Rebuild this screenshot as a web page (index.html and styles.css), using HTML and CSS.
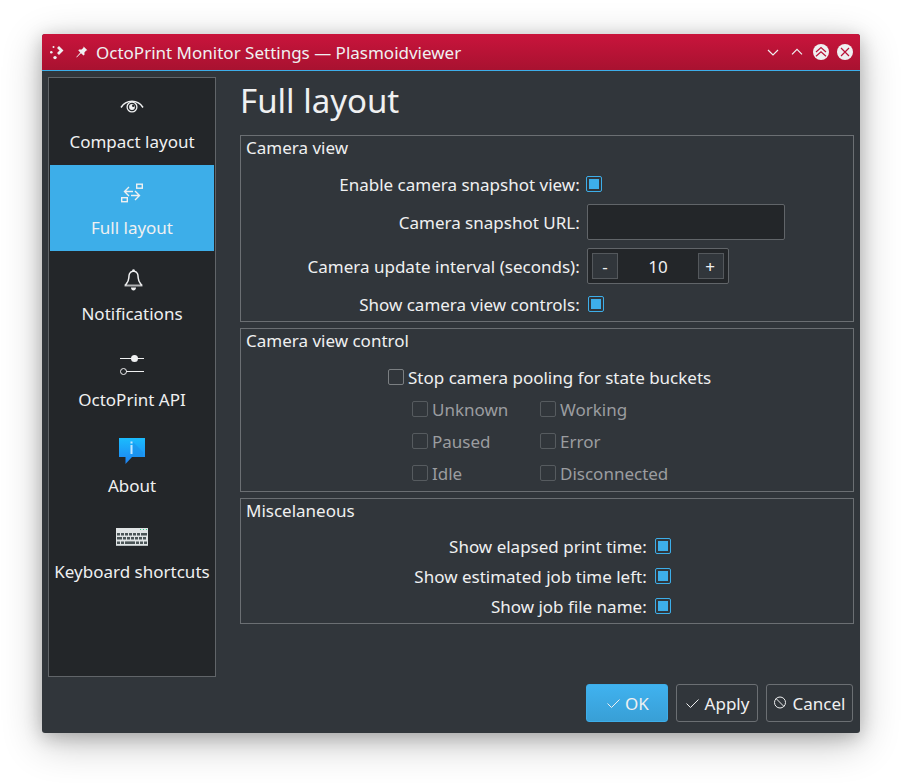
FILE: index.html
```html
<!DOCTYPE html>
<html lang="en">
<head>
<meta charset="utf-8">
<title>OctoPrint Monitor Settings</title>
<link rel="stylesheet" href="styles.css">
</head>
<body>
<main class="window">
  <header class="titlebar">
    <svg class="app-icon" width="16" height="16" viewBox="0 0 16 16"><path d="M8 3l3.500 3.500L8 10" fill="none" stroke="#eff0f1" stroke-width="2.800"/><circle cx="3.500" cy="3" r="1"/><circle cx="1.300" cy="8.300" r="1.300"/><circle cx="5" cy="13.600" r="1.700"/></svg>
    <svg class="pin-icon" width="12" height="12" viewBox="0 0 12 12"><path d="M7.600 .4l3.800 3.800-1.200.3-1.800 1.900.1 2.300-1 .9-2.500-2.400L.7 11.400.3 11l4-4.400L2.200 4.300l1-.8 2.400.1 1.800-1.900z"/></svg>
    <h1 class="caption">OctoPrint Monitor Settings — Plasmoidviewer</h1>
    <div class="controls">
      <svg width="16" height="16" viewBox="0 0 16 16"><path class="line" stroke-width="1.200" d="M3 6l5 5 5-5"/></svg>
      <svg width="16" height="16" viewBox="0 0 16 16"><path class="line" stroke-width="1.200" d="M3 10.300l5-5 5 5"/></svg>
      <svg width="16" height="16" viewBox="0 0 16 16"><circle cx="8" cy="8" r="8"/><path class="cut" d="M3 8l5-4.500L13 8M3 12.300l5-4.600 5 4.600"/></svg>
      <svg width="16" height="16" viewBox="0 0 16 16"><circle cx="8" cy="8" r="8"/><path class="cut" d="M4 4l8 8M12 4l-8 8"/></svg>
    </div>
  </header>
  <div class="body">
    <nav class="sidebar">
      <a class="item"><svg width="32" height="32" viewBox="0 0 32 32"><g class="line"><path stroke-width="1.500" d="M5 16.500C10 8.200 22 8.200 27 16.500"/><circle cx="16" cy="16" r="4.900" stroke-width="1.300"/></g><circle cx="16" cy="16" r="2.900"/><circle cx="17.300" cy="14.700" r="1.300" fill="#232629"/></svg><span>Compact layout</span></a>
      <a class="item selected"><svg width="32" height="32" viewBox="0 0 32 32"><g class="line" stroke-width="1.400"><rect x="20.700" y="7.200" width="5.600" height="4"/><rect x="5.700" y="20.700" width="5.600" height="4"/><path d="M17 14.500H8.500M13 10L8.500 14.500l4.500 4.500M15 18.500h8.500M19 14l4.500 4.500-4.500 4.500"/></g></svg><span>Full layout</span></a>
      <a class="item"><svg width="32" height="32" viewBox="0 0 32 32"><path class="line" stroke-width="1.500" d="M17.500 8c-4.400 1-4.500 3.500-4.700 7-.2 3.500-2 5-3.500 7.500M17.500 8c4.400 1 4.500 3.500 4.700 7 .2 3.500 2 5 3.500 7.500"/><path d="M8.500 21.500h18v2h-18z" opacity=".7"/><circle cx="17.500" cy="7.600" r="1.300"/><path d="M15 24.500h5c0 4-5 4-5 0z"/></svg><span>Notifications</span></a>
      <a class="item"><svg width="32" height="32" viewBox="0 0 32 32"><path class="line" d="M4 9.500h24M10 22.500h18"/><circle cx="18.500" cy="9.500" r="3.500"/><circle class="line" cx="7.500" cy="22.500" r="3"/></svg><span>OctoPrint API</span></a>
      <a class="item"><svg width="32" height="32" viewBox="0 0 32 32"><defs><linearGradient id="info" x2="0" y2="1"><stop stop-color="#1bbcfd"/><stop offset="1" stop-color="#1d82f3"/></linearGradient></defs><path fill="url(#info)" d="M3 3h26v19H16l-6.500 7V22H3z"/><path fill="#1a8fe9" opacity=".55" d="M17 7l10 10v5H17z"/><path fill="#c3e6ff" d="M14.500 6.500h2v2h-2zM14.500 10h2v9h-2z"/></svg><span>About</span></a>
      <a class="item"><svg width="32" height="32" viewBox="0 0 32 32"><path fill="#dfe3e4" d="M0 7h32v18H0z"/><path stroke="#b9bfc1" d="M0 24.500h32"/><path stroke="#35c78a" stroke-dasharray="1 2" d="M24 8.500h7"/><g stroke="#4a5456" stroke-width="2.600"><path stroke-dasharray="3 1" d="M1 13.300h23"/><path d="M25 13.300h6M1 17.300h5"/><path stroke-dasharray="3 1" d="M7 17.300h24M1 21.700h7M20 21.700h11"/><path d="M9 21.700h10"/></g></svg><span>Keyboard shortcuts</span></a>
    </nav>
    <section class="page">
      <h2>Full layout</h2>
      <fieldset class="group camera">
        <div class="group-title">Camera view</div>
        <div class="camera-form">
          <label>Enable camera snapshot view:</label><i class="check on shifted"></i>
          <label>Camera snapshot URL:</label><div class="field"></div>
          <label>Camera update interval (seconds):</label><div class="spin"><b>-</b><span>10</span><b class="plus">+</b></div>
          <label>Show camera view controls:</label><i class="check on"></i>
        </div>
      </fieldset>
      <fieldset class="group control">
        <div class="group-title">Camera view control</div>
        <div class="option main-option"><i class="check"></i><span>Stop camera pooling for state buckets</span></div>
        <div class="buckets">
          <div class="option"><i class="check"></i><span>Unknown</span></div><div class="option"><i class="check"></i><span>Working</span></div>
          <div class="option"><i class="check"></i><span>Paused</span></div><div class="option"><i class="check"></i><span>Error</span></div>
          <div class="option"><i class="check"></i><span>Idle</span></div><div class="option"><i class="check"></i><span>Disconnected</span></div>
        </div>
      </fieldset>
      <fieldset class="group misc">
        <div class="group-title">Miscelaneous</div>
        <div class="misc-form">
          <label>Show elapsed print time:</label><i class="check on"></i>
          <label>Show estimated job time left:</label><i class="check on"></i>
          <label>Show job file name:</label><i class="check on"></i>
        </div>
      </fieldset>
    </section>
  </div>
  <footer class="actions">
    <div class="button primary"><svg width="16" height="16" viewBox="0 0 16 16"><path class="line" d="M2.500 8.500l4 4 8-8"/></svg><span>OK</span></div>
    <div class="button apply"><svg width="16" height="16" viewBox="0 0 16 16"><path class="line" d="M1.500 8.500l4 4 8-8"/></svg><span>Apply</span></div>
    <div class="button cancel"><svg width="16" height="16" viewBox="0 0 16 16"><g class="line"><circle cx="7" cy="7.500" r="5.500"/><path d="M3 3.500l8 8"/></g></svg><span>Cancel</span></div>
  </footer>
</main>
</body>
</html>
```
FILE: styles.css
```css
* { box-sizing: border-box; }
body { margin: 0; padding: 34px 42px 50px; background: #fff; color: #eff0f1; font: 17px/24px "Noto Sans", sans-serif; }
h1, h2, fieldset { margin: 0; padding: 0; font-weight: 400; min-width: 0; }
svg { display: block; flex: none; fill: #eff0f1; }
.line { fill: none; stroke: #eff0f1; }
.window { width: 818px; height: 699px; display: flex; flex-direction: column; background: #31363b; border-radius: 3px; box-shadow: 0 10px 40px rgba(0,0,0,.24), 0 4px 18px rgba(0,0,0,.22); }
.titlebar { height: 37px; display: flex; align-items: center; padding: 0 7px 0 6px; background: linear-gradient(#c9143c, #a81230); border-bottom: 1px solid #3daee9; border-radius: 3px 3px 0 0; }
.app-icon { margin-left: 2px; overflow: visible; }
.pin-icon { margin-left: 10px; }
.caption { margin-left: 8px; font-size: 17px; line-height: 36px; padding-top: 2px; }
.controls { display: flex; gap: 8px; margin-left: auto; }
.cut { fill: none; stroke: #b91238; stroke-width: 1.2; }
.body { display: flex; padding: 6px 6px 0; }
.sidebar { width: 168px; height: 600px; padding: 1px; background: #232629; border: 1px solid #616569; }
.item { height: 86px; display: flex; flex-direction: column; align-items: center; padding-top: 12px; white-space: nowrap; }
.item span { margin-top: 7px; }
.selected { background: #3daee9; }
.page { width: 614px; margin-left: 24px; }
h2 { font-size: 33px; line-height: 46px; padding-top: 1px; margin-bottom: 11px; }
.group { border: 1px solid #6b6f73; margin-bottom: 6px; }
.group-title { height: 24px; padding-left: 5px; }
.camera { height: 187px; }
.camera-form { display: grid; grid-template-columns: 339px 198px; grid-template-rows: 24px 36px 36px 24px; gap: 8px 7px; padding-top: 12px; align-items: center; }
.camera-form label, .misc-form label { text-align: right; padding: 2px .3px 0 0; white-space: nowrap; }
.check { width: 16px; height: 16px; flex: none; border: 1px solid #7b7f82; border-radius: 2px; }
.on { border-color: #3daee9; background: #3daee9 content-box; padding: 2px; }
.camera-form .check { margin-left: 1px; }
.camera-form .shifted { margin-left: -1px; }
.field, .spin { height: 36px; background: #232629; border: 1px solid #616569; border-radius: 2px; }
.spin { width: 142px; display: flex; align-items: center; padding: 0 4px; }
.spin span { flex: 1; text-align: center; padding-top: 2px; }
.spin b { width: 26px; height: 26px; border: 1px solid #54585c; background: #31363b; text-align: center; font-weight: 400; line-height: 26px; }
.spin .plus { padding-right: 2px; }
.control { height: 164px; }
.option { display: flex; align-items: center; gap: 4px; }
.option span { padding-top: 2px; }
.main-option { height: 32px; margin: 8px 0 0 147px; }
.buckets { display: grid; grid-template-columns: 128px 150px; grid-auto-rows: 32px; margin-left: 171px; }
.buckets span { color: #9b9da0; }
.buckets .check { border-color: #565b5f; }
.misc { height: 126px; }
.misc-form { display: grid; grid-template-columns: 406px 16px; grid-auto-rows: 30px; column-gap: 8px; align-items: center; padding-top: 8px; }
.actions { display: flex; justify-content: flex-end; gap: 8px; padding: 7px 7px 0; }
.button { height: 38px; width: 82px; display: flex; align-items: center; justify-content: center; gap: 4px; border: 1px solid #6b6f73; border-radius: 3px; }
.button span { padding-top: 2px; }
.button.cancel { width: 87px; padding-right: 1px; }
.primary { background: linear-gradient(#40b2ef, #389fd6); border-color: #3daee9; }
```
